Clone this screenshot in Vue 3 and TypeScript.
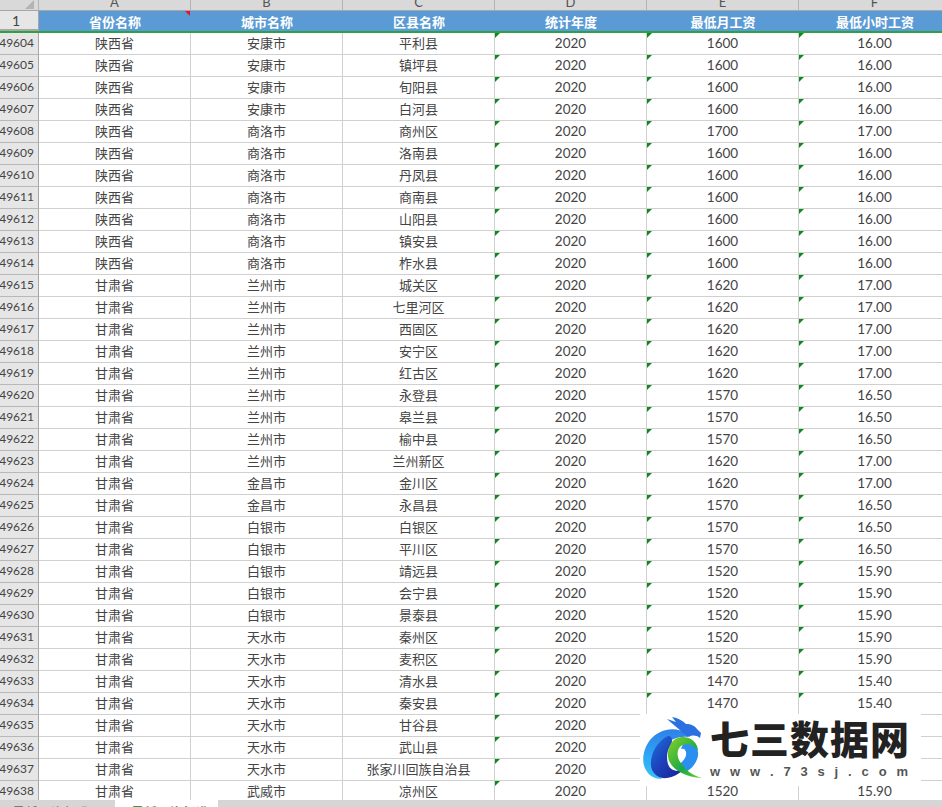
<script setup lang="ts">
interface Row {
  no: number;
  province: string;
  city: string;
  district: string;
  month?: number;
  hour?: string;
}

const columns = ['A', 'B', 'C', 'D', 'E', 'F'];
const headers = ['省份名称', '城市名称', '区县名称', '统计年度', '最低月工资', '最低小时工资'];
const urlChars = 'www.73sj.com'.split('');

// province, city, district, monthly, hourly (pay is left out where the logo sits on top)
const source: [string, string, string, number?, string?][] = [
  ['陕西省', '安康市', '平利县', 1600, '16.00'],
  ['陕西省', '安康市', '镇坪县', 1600, '16.00'],
  ['陕西省', '安康市', '旬阳县', 1600, '16.00'],
  ['陕西省', '安康市', '白河县', 1600, '16.00'],
  ['陕西省', '商洛市', '商州区', 1700, '17.00'],
  ['陕西省', '商洛市', '洛南县', 1600, '16.00'],
  ['陕西省', '商洛市', '丹凤县', 1600, '16.00'],
  ['陕西省', '商洛市', '商南县', 1600, '16.00'],
  ['陕西省', '商洛市', '山阳县', 1600, '16.00'],
  ['陕西省', '商洛市', '镇安县', 1600, '16.00'],
  ['陕西省', '商洛市', '柞水县', 1600, '16.00'],
  ['甘肃省', '兰州市', '城关区', 1620, '17.00'],
  ['甘肃省', '兰州市', '七里河区', 1620, '17.00'],
  ['甘肃省', '兰州市', '西固区', 1620, '17.00'],
  ['甘肃省', '兰州市', '安宁区', 1620, '17.00'],
  ['甘肃省', '兰州市', '红古区', 1620, '17.00'],
  ['甘肃省', '兰州市', '永登县', 1570, '16.50'],
  ['甘肃省', '兰州市', '皋兰县', 1570, '16.50'],
  ['甘肃省', '兰州市', '榆中县', 1570, '16.50'],
  ['甘肃省', '兰州市', '兰州新区', 1620, '17.00'],
  ['甘肃省', '金昌市', '金川区', 1620, '17.00'],
  ['甘肃省', '金昌市', '永昌县', 1570, '16.50'],
  ['甘肃省', '白银市', '白银区', 1570, '16.50'],
  ['甘肃省', '白银市', '平川区', 1570, '16.50'],
  ['甘肃省', '白银市', '靖远县', 1520, '15.90'],
  ['甘肃省', '白银市', '会宁县', 1520, '15.90'],
  ['甘肃省', '白银市', '景泰县', 1520, '15.90'],
  ['甘肃省', '天水市', '秦州区', 1520, '15.90'],
  ['甘肃省', '天水市', '麦积区', 1520, '15.90'],
  ['甘肃省', '天水市', '清水县', 1470, '15.40'],
  ['甘肃省', '天水市', '秦安县', 1470, '15.40'],
  ['甘肃省', '天水市', '甘谷县'],
  ['甘肃省', '天水市', '武山县'],
  ['甘肃省', '天水市', '张家川回族自治县'],
  ['甘肃省', '武威市', '凉州区', 1520, '15.90'],
];

const rows: Row[] = source.map(([province, city, district, month, hour], i) => ({
  no: 49604 + i,
  province,
  city,
  district,
  month,
  hour,
}));
</script>

<template>
  <div class="sheet">
    <div class="grid-area">
      <div class="line col-head">
        <div class="corner"><span class="corner-mark"></span></div>
        <div v-for="c in columns" :key="c" class="col-letter"><span>{{ c }}</span></div>
      </div>

      <div class="line head-row">
        <div class="row-no first">1</div>
        <div v-for="(h, i) in headers" :key="h" class="head-cell">
          {{ h }}
          <i v-if="i === 0" class="comment"></i>
        </div>
      </div>

      <div v-for="r in rows" :key="r.no" class="line data-row">
        <div class="row-no">{{ r.no }}</div>
        <div class="cell">{{ r.province }}</div>
        <div class="cell">{{ r.city }}</div>
        <div class="cell">{{ r.district }}</div>
        <div class="cell num flag">2020</div>
        <div class="cell num flag">{{ r.month }}</div>
        <div class="cell num flag">{{ r.hour }}</div>
      </div>
    </div>

    <div class="tabs">
      <span class="tab">最低工资标准</span>
      <span class="tab active">最低工资标准</span>
      <span class="tab-add">+</span>
    </div>

    <div class="watermark">
      <svg class="logo" viewBox="640 714 70 72" width="70" height="72">
        <defs>
          <linearGradient id="outer" x1="0" y1="0" x2="0" y2="1">
            <stop offset="0" stop-color="#2f7fe8" />
            <stop offset="0.55" stop-color="#2fa8f5" />
            <stop offset="1" stop-color="#35c3f5" />
          </linearGradient>
          <linearGradient id="deep" x1="0" y1="0" x2="1" y2="1">
            <stop offset="0" stop-color="#1f74e0" />
            <stop offset="0.5" stop-color="#1c3fb8" />
            <stop offset="1" stop-color="#1a1f96" />
          </linearGradient>
          <linearGradient id="leaf" x1="0" y1="0" x2="1" y2="1">
            <stop offset="0" stop-color="#8bd21e" />
            <stop offset="0.6" stop-color="#17a84a" />
            <stop offset="1" stop-color="#6fd52a" />
          </linearGradient>
        </defs>
        <!-- outer sweep, dark inner band, right swirl, green ring, dragon head -->
        <path fill="url(#outer)" d="M688 734 C676 726 660 728 650 740 C643 749 641 762 646 770 C649 776 655 779 662 779 C655 771 654 754 664 745 C671 739 680 736 688 737 Z" />
        <path fill="url(#deep)" d="M668 736 C656 742 650 755 651 766 C652 774 659 779 667 778 C673 777 679 774 683 770 C675 772 670 770 668 764 C666 757 667 750 671 745 C673 741 672 735 668 736 Z" />
        <path fill="#2a8fee" d="M683 744 C691 741 697 746 698 752 C699 760 693 768 686 772 C683 771 680 768 678 765 C683 762 687 757 686 752 C685 749 684 748 681 749 Z" />
        <path fill="url(#leaf)" d="M698 751 C698 742 690 736 681 737 C672 738 667 748 668 757 C670 769 684 777 702 778 C690 775 683 767 679 760 C676 753 678 747 683 745 C689 743 695 746 698 751 Z" />
        <path fill="#2a70e0" d="M667 719 L676 722 L672 717 C678 718 683 721 686 724 C691 724 695 726 697 729 L701 733 L700 738 C696 735 692 735 689 737 L684 734 C680 730 673 724 667 719 Z" />
      </svg>
      <div class="brand">
        <div class="brand-name">七三数据网</div>
        <div class="brand-url">
          <span v-for="(ch, i) in urlChars" :key="i">{{ ch }}</span>
        </div>
      </div>
    </div>
  </div>
</template>

<style scoped>
.sheet {
  position: relative;
  display: flex;
  flex-direction: column;
  width: 942px;
  height: 807px;
  overflow: hidden;
  background: #fff;
  font-family: Lato, 'Noto Sans CJK SC', sans-serif;
  color: #444;
}

.grid-area {
  flex: 1;
  min-height: 0;
  overflow: hidden;
}

.line {
  display: grid;
  grid-template-columns: 39px repeat(6, 152px);
}

.col-head {
  height: 11px;
  background: #d9d9d9;
  border-bottom: 1px solid #a6a6a6;
  box-sizing: border-box;
}

.corner {
  display: flex;
  justify-content: flex-end;
  align-items: flex-end;
  padding: 0 4px 1px 0;
  border-right: 1px solid #b4b4b4;
}

.corner-mark {
  width: 0;
  height: 0;
  border-left: 9px solid transparent;
  border-bottom: 9px solid #b4b4b4;
}

.col-letter {
  display: flex;
  justify-content: center;
  align-items: flex-end;
  height: 10px;
  overflow: hidden;
  border-right: 1px solid #b4b4b4;
  font-size: 13px;
  line-height: 15px;
  color: #555;
}

.col-letter span {
  display: block;
  height: 15px;
}

.head-row {
  height: 22px;
  box-sizing: border-box;
  border-bottom: 2px solid #2fa043;
}

.head-cell {
  position: relative;
  display: flex;
  align-items: center;
  justify-content: center;
  background: #5b9bd5;
  color: #fff;
  font-size: 13px;
  font-weight: 700;
  font-family: 'Noto Sans CJK SC', sans-serif;
}

.comment {
  position: absolute;
  top: 0;
  right: 1px;
  width: 0;
  height: 0;
  border-left: 5px solid transparent;
  border-top: 5px solid #e8112d;
}

.data-row {
  height: 22px;
}

.row-no {
  display: flex;
  align-items: center;
  justify-content: flex-end;
  padding: 0 4px 2px 0;
  background: #e6e6e6;
  border-right: 1px solid #a6a6a6;
  border-bottom: 1px solid #b8b8b8;
  font-size: 12px;
  color: #444;
}

.row-no.first {
  justify-content: center;
  padding: 0 6px 0 0;
  border-bottom: 2px solid #a6a6a6;
  font-size: 14px;
}

.cell {
  position: relative;
  display: flex;
  align-items: center;
  justify-content: center;
  padding-bottom: 2px;
  border-right: 1px solid #d0d0d0;
  border-bottom: 1px solid #d0d0d0;
  font-size: 13px;
  font-family: 'Noto Sans CJK SC', sans-serif;
}

.cell.num {
  font-family: Lato, sans-serif;
  font-size: 13.5px;
}

.flag::before {
  content: '';
  position: absolute;
  top: 0;
  left: 0;
  width: 0;
  height: 0;
  border-top: 5px solid #0f8a1e;
  border-right: 5px solid transparent;
}

.tabs {
  display: flex;
  flex: none;
  height: 7px;
  background: #d6d6d6;
  overflow: hidden;
  font-family: 'Noto Sans CJK SC', sans-serif;
  font-size: 13px;
  line-height: 24px;
}

.tab {
  box-sizing: border-box;
  width: 115px;
  padding-left: 12px;
  color: #666;
  white-space: nowrap;
}

.tab.active {
  width: 103px;
  padding-left: 16px;
  background: #fff;
  color: #2aa13d;
  font-weight: 700;
}

.tab-add {
  margin-left: 10px;
  color: #555;
}

.watermark {
  position: absolute;
  left: 640px;
  top: 714px;
  display: flex;
  width: 281px;
  height: 72px;
  background: #fff;
}

.logo {
  flex: none;
}

.brand {
  color: #222;
}

.brand-name {
  font-family: 'Noto Sans CJK SC', sans-serif;
  font-weight: 900;
  font-size: 39px;
  line-height: 46px;
  letter-spacing: 1px;
  white-space: nowrap;
}

.brand-url {
  display: flex;
  justify-content: space-between;
  width: 198px;
  margin-top: 5px;
  font-family: 'Liberation Sans', sans-serif;
  font-size: 13px;
  font-weight: 700;
  line-height: 14px;
  color: #555;
}
</style>
<style>
html,
body {
  margin: 0;
  background: #fff;
}
</style>
